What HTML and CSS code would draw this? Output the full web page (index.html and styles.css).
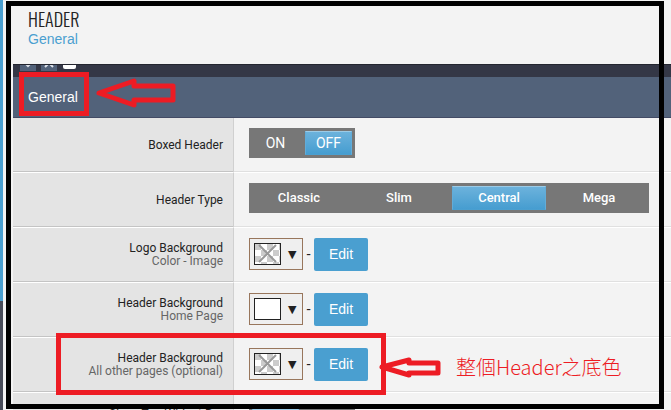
FILE: index.html
```html
<!DOCTYPE html>
<html lang="zh-Hant">
<head>
    <meta charset="UTF-8">
    <meta name="viewport" content="width=device-width, initial-scale=1.0">
    <title>Header - General</title>
    <link rel="stylesheet" href="styles.css">
</head>
<body>

<div class="page">
    <div class="side-strip"></div>

    <main class="panel">
        <header class="panel-header">
            <h1>HEADER</h1>
            <p>General</p>
        </header>

        <div class="toolbar">
            <button class="tool-button" aria-label="Expand all">
                <svg width="16" height="16" viewBox="0 0 16 16"><path d="M5 8l3 3 3-3" /></svg>
            </button>
            <button class="tool-button" aria-label="Collapse all">
                <svg width="16" height="16" viewBox="0 0 16 16"><path d="M4 12l4-4 4 4" /></svg>
            </button>
            <input type="checkbox" class="tool-check" aria-label="Select all">
        </div>

        <h2 class="section-title">General</h2>

        <div class="row">
            <div class="label">Boxed Header</div>
            <div class="control">
                <div class="segment toggle" role="radiogroup" aria-label="Boxed Header">
                    <label><input type="radio" name="boxed"><span>ON</span></label>
                    <label><input type="radio" name="boxed" checked><span>OFF</span></label>
                </div>
            </div>
        </div>

        <div class="row">
            <div class="label">Header Type</div>
            <div class="control">
                <div class="segment types" role="radiogroup" aria-label="Header Type">
                    <label><input type="radio" name="type"><span>Classic</span></label>
                    <label><input type="radio" name="type"><span>Slim</span></label>
                    <label><input type="radio" name="type" checked><span>Central</span></label>
                    <label><input type="radio" name="type"><span>Mega</span></label>
                </div>
            </div>
        </div>

        <div class="row">
            <div class="label">Logo Background<small>Color - Image</small></div>
            <div class="control">
                <button class="picker" aria-label="Logo Background color">
                    <span class="swatch empty"><svg viewBox="0 0 25 20"><path d="M4 1l17 17M21 1L4 18" /></svg></span>
                    <span class="arrow">▼</span>
                </button>
                <span class="dash">-</span>
                <button class="edit">Edit</button>
            </div>
        </div>

        <div class="row">
            <div class="label">Header Background<small>Home Page</small></div>
            <div class="control">
                <button class="picker" aria-label="Header Background color">
                    <span class="swatch"></span>
                    <span class="arrow">▼</span>
                </button>
                <span class="dash">-</span>
                <button class="edit">Edit</button>
            </div>
        </div>

        <div class="row">
            <div class="label">Header Background<small>All other pages (optional)</small></div>
            <div class="control">
                <button class="picker" aria-label="Header Background color, other pages">
                    <span class="swatch empty"><svg viewBox="0 0 25 20"><path d="M4 1l17 17M21 1L4 18" /></svg></span>
                    <span class="arrow">▼</span>
                </button>
                <span class="dash">-</span>
                <button class="edit">Edit</button>
            </div>
        </div>

        <div class="row row-tall">
            <div class="label">Show Top Widget Bar<small>Header</small></div>
            <div class="control">
                <div class="segment toggle" role="radiogroup" aria-label="Show Top Widget Bar">
                    <label><input type="radio" name="widget" checked><span>ON</span></label>
                    <label><input type="radio" name="widget"><span>OFF</span></label>
                </div>
            </div>
        </div>
    </main>

    <!-- annotations drawn over the page -->
    <div class="frame"></div>
    <div class="mark mark-title"></div>
    <div class="mark mark-row"></div>
    <svg class="pointer pointer-title" width="82" height="32" viewBox="0 0 82 32">
        <path d="M4 16L39 4V9H78V23H39V28Z" />
    </svg>
    <svg class="pointer pointer-row" width="64" height="24" viewBox="0 0 64 24">
        <path d="M4 12L31 5V8H60V18H31V20Z" />
    </svg>
    <p class="note">整個Header之底色</p>
</div>

</body>
</html>
```
FILE: styles.css
```css
* {
    box-sizing: border-box;
}
body {
    margin: 0;
    background-color: #f3f3f3;
    font-family: "Liberation Sans", Arial, sans-serif;
    font-size: 14px;
    color: #222;
}
h1, h2, p {
    margin: 0;
    font-weight: normal;
}
button {
    font-family: inherit;
    cursor: pointer;
}
.page {
    position: relative;
    display: flex;
    height: 100vh;
    overflow: hidden;
}
.side-strip {
    flex: none;
    width: 3px;
    background: linear-gradient(#4a9fd0 301px, #474b59 301px);
}
.panel {
    flex: 1;
    min-width: 0;
    margin-left: 10px;
}
.panel-header {
    height: 64px;
    padding: 7px 15px 0;
}
.panel-header h1 {
    font-family: Oswald, "Roboto Condensed", Roboto, sans-serif;
    font-size: 18px;
    font-weight: 300;
    line-height: 24px;
}
.panel-header p {
    line-height: 16px;
    color: #4a9fd0;
}
.toolbar {
    display: flex;
    align-items: flex-end;
    gap: 5px;
    height: 13px;
    padding: 0 7px 6px;
    overflow: hidden;
    background-color: #343746;
    border-top: 1px solid #23252f;
}
.tool-button {
    flex: none;
    width: 16px;
    height: 16px;
    padding: 0;
    border: none;
    background-color: #52627a;
}
.tool-button svg {
    display: block;
    fill: none;
    stroke: #dde2ea;
    stroke-width: 2;
}
.tool-check {
    appearance: none;
    flex: none;
    width: 13px;
    height: 13px;
    margin: 0 0 2px 1px;
    background-color: #fff;
    border-radius: 2px;
}
.section-title {
    height: 41px;
    padding-left: 15px;
    font-size: 14px;
    line-height: 40px;
    color: #fff;
    background-color: #52627a;
    border-bottom: 1px solid #434b65;
}
.row {
    display: flex;
    height: 55px;
}
.row-tall {
    height: 61px;
}
.row-tall .label {
    padding-bottom: 4px;
}
.label {
    flex: none;
    display: flex;
    flex-direction: column;
    justify-content: center;
    width: 221px;
    padding-right: 10px;
    font-family: Roboto, sans-serif;
    font-size: 12px;
    line-height: 13px;
    text-align: right;
    background-color: #e4e4e4;
    border-right: 1px solid #d0d0d0;
    border-bottom: 1px solid #fff;
    box-shadow: inset 0 -1px #c4c4c4;
}
.label small {
    font-size: 12px;
    color: #666;
}
.control {
    flex: 1;
    display: flex;
    align-items: center;
    min-width: 0;
    padding: 0 15px 2px;
    border-bottom: 1px solid #fff;
    box-shadow: inset 0 -1px #e0e0e0;
}
.segment {
    display: flex;
    height: 30px;
    margin-bottom: 2px;
    background-color: #777;
}
.toggle {
    width: 106px;
}
.types {
    width: 400px;
}
.segment label {
    flex: 1;
    display: flex;
    padding: 3px;
    cursor: pointer;
}
.segment input {
    appearance: none;
    width: 0;
    height: 0;
    margin: 0;
}
.segment span {
    flex: 1;
    font-family: Roboto, sans-serif;
    font-size: 13px;
    font-weight: 500;
    line-height: 22px;
    text-align: center;
    color: #fff;
    border: 1px solid transparent;
}
.toggle span {
    font-size: 14px;
    font-weight: 400;
}
.segment input:checked + span {
    background: linear-gradient(#6cb2dc, #469dd0);
    border-color: #9ccbe6 #62acd8 #4a9fd0;
}
.picker {
    display: flex;
    align-items: center;
    gap: 7px;
    width: 54px;
    height: 32px;
    padding: 0 4px;
    background-color: #efefef;
    border: 1px solid #98765c;
}
.swatch {
    flex: none;
    width: 27px;
    height: 22px;
    background-color: #fff;
    border: 1px solid #222;
}
.swatch.empty {
    background: repeating-conic-gradient(#fff 0 25%, #ccc 0 50%) 0 0 / 12px 12px;
}
.swatch svg {
    display: block;
    fill: none;
    stroke: #999;
    stroke-width: 2;
}
.arrow {
    font-family: "DejaVu Sans", sans-serif;
    font-size: 11px;
    color: #222;
}
.dash {
    width: 11px;
    text-align: center;
}
.edit {
    width: 54px;
    height: 33px;
    padding: 0;
    font-size: 14px;
    color: #fff;
    background-color: #4a9fd0;
    border: none;
    border-radius: 2px;
}
.frame {
    position: absolute;
    inset: 1px 7px 1px 6px;
    border: 5px solid #000;
    pointer-events: none;
}
.mark {
    position: absolute;
    border: 5px solid #ed1c24;
    pointer-events: none;
}
.mark-title {
    left: 19px;
    top: 72px;
    width: 70px;
    height: 44px;
}
.mark-row {
    left: 56px;
    top: 333px;
    width: 330px;
    height: 62px;
}
.pointer {
    position: absolute;
    fill: none;
    stroke: #ed1c24;
    stroke-width: 5;
    stroke-linejoin: round;
}
.pointer-title {
    left: 95px;
    top: 77px;
}
.pointer-row {
    left: 378px;
    top: 355px;
}
.note {
    position: absolute;
    left: 456px;
    top: 352px;
    font-family: "Noto Sans CJK TC", sans-serif;
    font-size: 20px;
    font-weight: 300;
    line-height: 30px;
    color: #ed1c24;
    white-space: nowrap;
}
```
